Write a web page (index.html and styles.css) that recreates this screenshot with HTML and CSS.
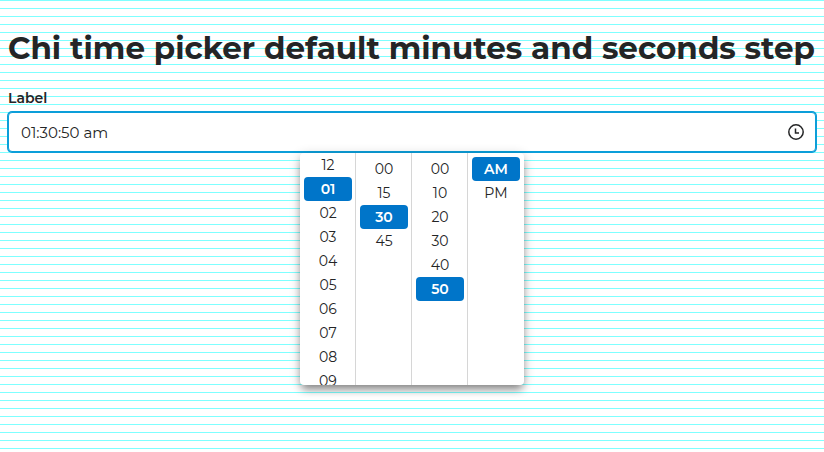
FILE: index.html
```html
<!DOCTYPE html>
<html lang="en">
<head>
<meta charset="utf-8">
<meta name="viewport" content="width=device-width, initial-scale=1">
<title>Chi time picker</title>
<link rel="stylesheet" href="styles.css">
</head>
<body>
<main>
  <h1 class="title">Chi time picker default minutes and seconds step</h1>
  <div class="field">
    <label class="field-label" for="time">Label</label>
    <div class="field-control">
      <input class="field-input" id="time" type="text" value="01:30:50 am">
      <svg class="field-icon" viewBox="0 0 16 16" aria-hidden="true">
        <circle cx="8" cy="8" r="7.2"/>
        <path d="M7.5 4.5V8.9H11"/>
      </svg>
      <div class="picker">
        <div class="column column-scrolled">
          <button class="option">12</button>
          <button class="option option-active">01</button>
          <button class="option">02</button>
          <button class="option">03</button>
          <button class="option">04</button>
          <button class="option">05</button>
          <button class="option">06</button>
          <button class="option">07</button>
          <button class="option">08</button>
          <button class="option">09</button>
        </div>
        <div class="column">
          <button class="option">00</button>
          <button class="option">15</button>
          <button class="option option-active">30</button>
          <button class="option">45</button>
        </div>
        <div class="column">
          <button class="option">00</button>
          <button class="option">10</button>
          <button class="option">20</button>
          <button class="option">30</button>
          <button class="option">40</button>
          <button class="option option-active">50</button>
        </div>
        <div class="column">
          <button class="option option-active">AM</button>
          <button class="option">PM</button>
        </div>
      </div>
    </div>
  </div>
</main>
</body>
</html>
```
FILE: styles.css
```css
* {
  box-sizing: border-box;
}

html {
  background: repeating-linear-gradient(#7fffff 0 1px, #fff 1px 8px);
}

body {
  min-height: 100vh;
  margin: 0;
  padding: 28px 8px 8px;
  color: #242526;
  font-family: Montserrat, Gotham, Inter, sans-serif;
  font-size: 14px;
  line-height: 20px;
}

.title {
  margin: 0 0 20px;
  font-size: 31px;
  font-weight: 700;
  line-height: 40px;
  white-space: nowrap;
}

.field-label {
  display: block;
  margin-bottom: 4px;
  font-weight: 600;
}

.field-control {
  position: relative;
}

.field-input {
  display: block;
  width: 100%;
  height: 40px;
  padding: 0 40px 0 12px;
  border: 1px solid #0c9ed9;
  border-radius: 4px;
  outline: 0;
  box-shadow: 0 0 0 1px #0c9ed9;
  background: #fff;
  color: #242526;
  font: inherit;
  font-size: 15px;
}

.field-icon {
  position: absolute;
  top: 12px;
  right: 12px;
  width: 16px;
  height: 16px;
  fill: none;
  stroke: #242526;
  stroke-width: 1.5;
}

.picker {
  position: absolute;
  top: 41px;
  left: 50%;
  display: flex;
  width: 224px;
  height: 232px;
  transform: translateX(-50%);
  overflow: hidden;
  border-radius: 4px;
  background: #fff;
  box-shadow: 0 6px 8px -2px rgba(0, 0, 0, 0.4), 0 2px 12px rgba(0, 0, 0, 0.2);
}

.column {
  flex: 1;
  padding: 4px 3px 0 4px;
  border-right: 1px solid #d6d6d6;
}

.column:last-child {
  padding-right: 4px;
  border-right: 0;
}

.column-scrolled {
  padding-top: 0;
}

.option {
  display: block;
  width: 100%;
  height: 24px;
  padding: 0;
  border: 0;
  border-radius: 4px;
  background: none;
  color: #242526;
  font: inherit;
  text-align: center;
}

.option-active {
  background: #0075c9;
  color: #fff;
  font-weight: 600;
}
```
